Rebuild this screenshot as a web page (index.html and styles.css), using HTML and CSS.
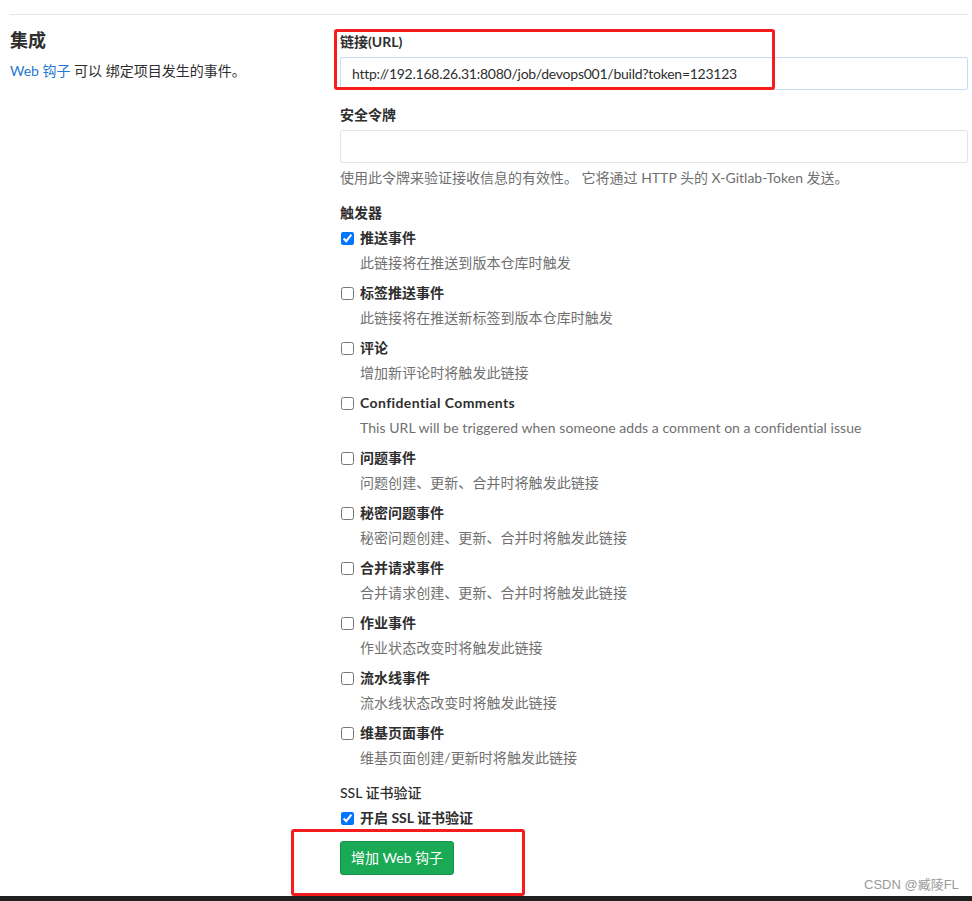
FILE: index.html
```html
<!DOCTYPE html>
<html lang="zh-CN">
<head>
<meta charset="utf-8">
<title>集成 - Web 钩子</title>
<link rel="stylesheet" href="styles.css">
</head>
<body>
<div class="page">
  <div class="settings">
    <div class="intro">
      <h4 class="title">集成</h4>
      <p class="intro-text"><a class="link">Web 钩子</a> 可以 绑定项目发生的事件。</p>
    </div>
    <form class="form">
      <div class="group">
        <label class="label">链接(URL)</label>
        <input class="input input-url" type="text" value="http://192.168.26.31:8080/job/devops001/build?token=123123">
      </div>
      <div class="group">
        <label class="label">安全令牌</label>
        <input class="input" type="text" value="">
        <p class="help">使用此令牌来验证接收信息的有效性。 它将通过 HTTP 头的 X-Gitlab-Token 发送。</p>
      </div>
      <div class="group">
        <div class="label">触发器</div>
        <ul class="triggers">
          <li class="trigger"><label class="check"><input type="checkbox" class="box" checked><span>推送事件</span></label><p class="trigger-help">此链接将在推送到版本仓库时触发</p></li>
          <li class="trigger"><label class="check"><input type="checkbox" class="box"><span>标签推送事件</span></label><p class="trigger-help">此链接将在推送新标签到版本仓库时触发</p></li>
          <li class="trigger"><label class="check"><input type="checkbox" class="box"><span>评论</span></label><p class="trigger-help">增加新评论时将触发此链接</p></li>
          <li class="trigger"><label class="check"><input type="checkbox" class="box"><span class="latin-bold">Confidential Comments</span></label><p class="trigger-help">This URL will be triggered when someone adds a comment on a confidential issue</p></li>
          <li class="trigger"><label class="check"><input type="checkbox" class="box"><span>问题事件</span></label><p class="trigger-help">问题创建、更新、合并时将触发此链接</p></li>
          <li class="trigger"><label class="check"><input type="checkbox" class="box"><span>秘密问题事件</span></label><p class="trigger-help">秘密问题创建、更新、合并时将触发此链接</p></li>
          <li class="trigger"><label class="check"><input type="checkbox" class="box"><span>合并请求事件</span></label><p class="trigger-help">合并请求创建、更新、合并时将触发此链接</p></li>
          <li class="trigger"><label class="check"><input type="checkbox" class="box"><span>作业事件</span></label><p class="trigger-help">作业状态改变时将触发此链接</p></li>
          <li class="trigger"><label class="check"><input type="checkbox" class="box"><span>流水线事件</span></label><p class="trigger-help">流水线状态改变时将触发此链接</p></li>
          <li class="trigger"><label class="check"><input type="checkbox" class="box"><span>维基页面事件</span></label><p class="trigger-help">维基页面创建/更新时将触发此链接</p></li>
        </ul>
      </div>
      <div class="group">
        <div class="label label-normal">SSL 证书验证</div>
        <label class="check"><input type="checkbox" class="box" checked><span>开启 SSL 证书验证</span></label>
      </div>
      <div class="actions">
        <button type="button" class="btn-create">增加 Web 钩子</button>
      </div>
    </form>
  </div>
  <div class="bottom-bar"></div>
  <div class="mark mark-url"></div>
  <div class="mark mark-btn"></div>
  <div class="watermark">CSDN @臧陵FL</div>
</div>
</body>
</html>
```

FILE: styles.css
```css
* { box-sizing: border-box; }
html, body { margin: 0; padding: 0; background: #fff; }
body {
  font-family: Lato, "Noto Sans CJK SC", sans-serif;
  font-size: 14px;
  line-height: 20px;
  color: #2e2e2e;
}
.page {
  position: relative;
  min-height: 901px;
  display: flex;
  flex-direction: column;
}
.settings {
  margin: 14px 4px 0 10px;
  border-top: 1px solid #e5e5e5;
  display: grid;
  grid-template-columns: 330px 1fr;
}
.intro { padding-top: 13px; }
.title {
  margin: 0;
  font-size: 18px;
  line-height: 24px;
  font-weight: 700;
  color: #2e2e2e;
}
.intro-text { margin: 9px 0 0; }
.link { color: #1f78d1; text-decoration: none; }
.form { padding-top: 17px; }
.group { margin-bottom: 15px; }
.label {
  display: block;
  font-weight: 700;
  margin-bottom: 5px;
}
.label-normal { font-weight: 500; }
.input {
  display: block;
  width: 100%;
  height: 33px;
  padding: 6px 11px;
  border: 1px solid #e5e5e5;
  border-radius: 2px;
  font: inherit;
  color: #2e2e2e;
  background: #fff;
  outline: none;
}
.input-url {
  border-color: #c4dcf4;
  letter-spacing: -0.25px;
}
.help {
  margin: 5px 0 0;
  color: #707070;
}
.triggers { list-style: none; margin: 0; padding: 0; }
.trigger { margin-bottom: 10px; }
.trigger:last-child { margin-bottom: 0; }
.check {
  display: flex;
  align-items: center;
  font-weight: 700;
}
.latin-bold { letter-spacing: 0.4px; }
.box {
  width: 13px;
  height: 13px;
  margin: 0 6px 0 1px;
}
.trigger-help {
  margin: 5px 0 0 20px;
  color: #707070;
  letter-spacing: 0.05px;
}
.actions { margin-top: -2px; }
.btn-create {
  height: 34px;
  padding: 0 10px;
  border: 1px solid #168f48;
  border-radius: 3px;
  background: #1aaa55;
  color: #fff;
  font: inherit;
}
.bottom-bar {
  margin-top: auto;
  height: 5px;
  background: #202020;
}
.mark {
  position: absolute;
  border: 3px solid #f51d1d;
  border-radius: 3px;
}
.mark-url { left: 334px; top: 29px; width: 441px; height: 61px; }
.mark-btn { left: 291px; top: 829px; width: 234px; height: 67px; }
.watermark {
  position: absolute;
  left: 864px;
  top: 875px;
  color: #9a9a9a;
  font-family: "Liberation Sans", "Noto Sans CJK SC", sans-serif;
  font-size: 13px;
}
```
